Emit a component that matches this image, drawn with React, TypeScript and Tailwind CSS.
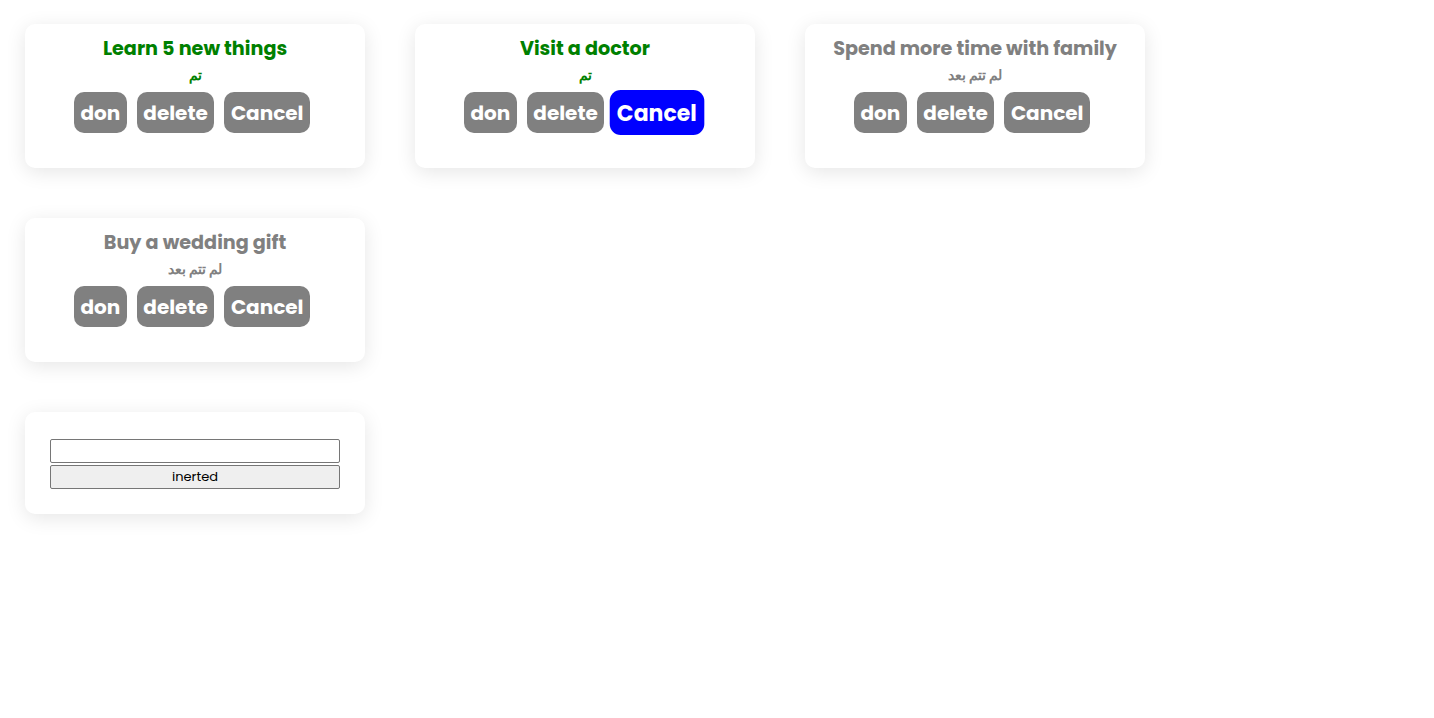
import React from "react";

const font = { fontFamily: '"Poppins", sans-serif' };

type Task = { title: string; done: boolean; active?: boolean };

const tasks: Task[] = [
  { title: "Learn 5 new things", done: true },
  { title: "Visit a doctor", done: true, active: true },
  { title: "Spend more time with family", done: false },
  { title: "Buy a wedding gift", done: false },
];

function Card({ t }: { t: Task }) {
  const color = t.done ? "text-[#008000]" : "text-[#808080]";
  return (
    <div className="m-[25px] flex h-[144px] w-[340px] flex-col items-center rounded-[10px] bg-white pt-[11px] shadow-[0_4px_20px_rgba(0,0,0,0.1)]">
      <h3 className={`text-[19.2px] font-bold leading-[27px] ${color}`}>{t.title}</h3>
      <div className={`mt-[3px] text-[14px] font-bold leading-[20px] ${color}`}>
        {t.done ? "تم" : "لم تتم بعد"}
      </div>
      <div className="mt-[7px] flex items-center gap-[10px] pr-[6px]">
        <button className="h-[41px] rounded-[10px] bg-[#808080] px-[6.5px] text-[20px] font-bold text-white">don</button>
        <button className="h-[41px] rounded-[10px] bg-[#808080] px-[6.5px] text-[20px] font-bold text-white">delete</button>
        <button
          className={`h-[41px] rounded-[10px] px-[6.5px] text-[20px] font-bold text-white ${
            t.active ? "scale-110 bg-[#0000ff]" : "bg-[#808080]"
          }`}
        >
          Cancel
        </button>
      </div>
    </div>
  );
}

export default function App() {
  return (
    <div className="min-h-[718px] bg-white" style={font}>
      <div className="-mt-[1px] flex flex-wrap">
        {tasks.map((t) => (
          <Card key={t.title} t={t} />
        ))}
      </div>
      <div className="m-[25px] flex w-[340px] flex-col rounded-[10px] bg-white px-[25px] pb-[25px] pt-[27px] shadow-[0_4px_20px_rgba(0,0,0,0.1)]">
        <input className="h-[24px] w-[290px] rounded-[2px] border border-[#767676] bg-white" />
        <button className="mt-[2px] h-[24px] w-[290px] rounded-[2px] border border-[#767676] bg-[#efefef] text-[13px] leading-[20px] text-black">
          inerted
        </button>
      </div>
    </div>
  );
}
